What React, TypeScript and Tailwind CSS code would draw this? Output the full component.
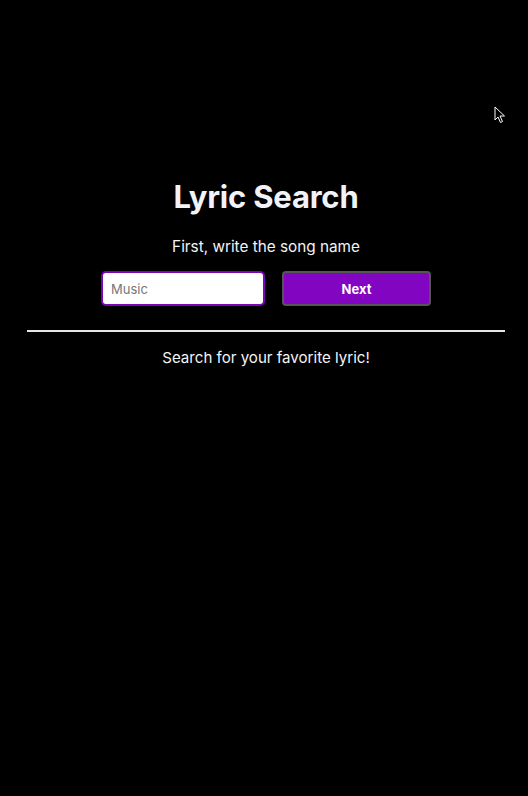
export default function App() {
  return (
    <div className="relative min-h-[796px] bg-black text-gray-100 font-['Inter',sans-serif]">
      {/* mouse pointer from the capture */}
      <svg className="absolute left-[494px] top-[106px]" width="12" height="18" viewBox="0 0 12 18">
        <path d="M1 1 L1 14 L4 11 L6.5 16.5 L8.5 15.5 L6 10 L10.5 10 Z" fill="black" stroke="white" strokeWidth="1" />
      </svg>

      <div className="flex flex-col items-center pt-[177px] pl-[27px] pr-[23px]">
        <h1 className="text-[31px] leading-[40px] font-bold tracking-[-0.2px] text-[#f1f3f8]">Lyric Search</h1>
        <p className="mt-[18px] text-[15.3px] leading-6 text-gray-100">First, write the song name</p>

        <form className="mt-[12px] flex gap-[17px]" onSubmit={(e) => e.preventDefault()}>
          <input
            type="text"
            placeholder="Music"
            className="w-[164px] h-[35px] rounded-[5px] border-2 border-[#7a06b8] bg-white px-2 text-[13px] text-gray-900 placeholder:text-[#777] outline-none"
          />
          <button
            type="submit"
            className="w-[149px] h-[35px] rounded-[4px] border-2 border-[#555] bg-[#8205c2] pt-[2px] text-[13px] font-bold text-white"
          >
            Next
          </button>
        </form>

        <hr className="mt-[24px] w-full border-0 border-t-2 border-[#e5e5e5]" />

        <p className="mt-[14px] text-[15.1px] leading-6 text-gray-100">Search for your favorite lyric!</p>
      </div>
    </div>
  )
}
